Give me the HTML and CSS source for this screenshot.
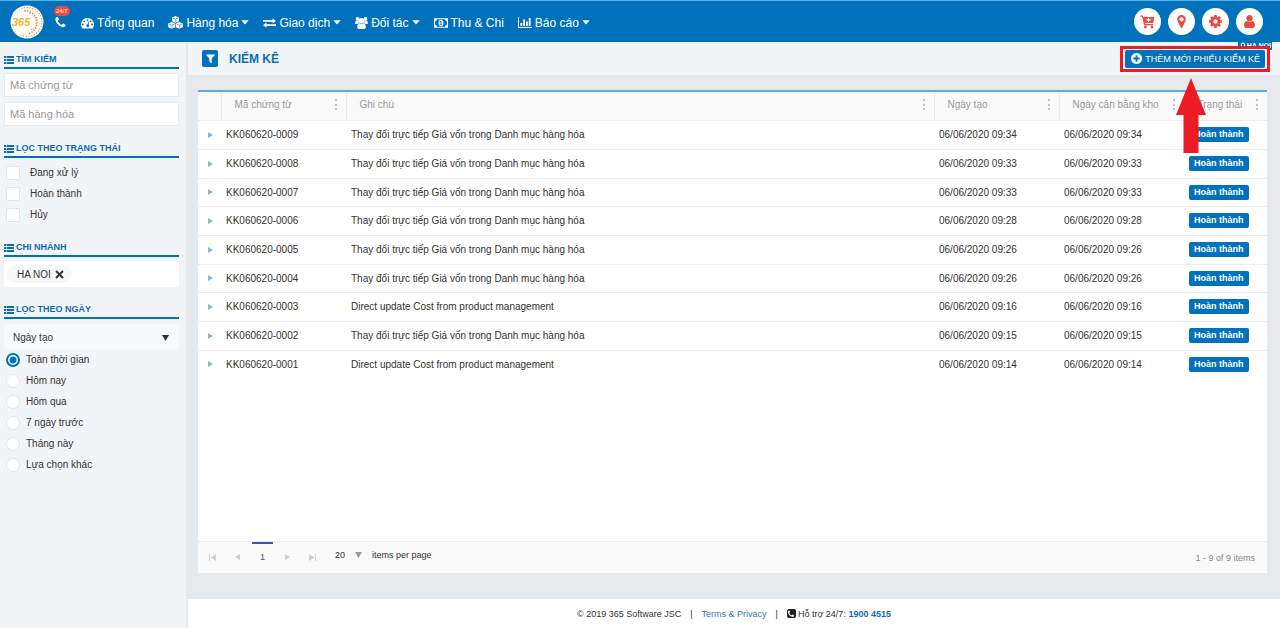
FILE: index.html
```html
<!DOCTYPE html>
<html lang="vi">
<head>
<meta charset="UTF-8">
<meta name="viewport" content="width=device-width, initial-scale=1">
<title>Kiểm kê</title>
<link rel="stylesheet" href="styles.css">
</head>
<body>

<!-- Icon dùng chung -->
<svg class="defs" width="0" height="0" aria-hidden="true">
  <symbol id="caret" viewBox="0 0 8 5"><path d="M0.3 0.3h7.4L4 4.6z"/></symbol>
  <symbol id="list" viewBox="0 0 10 8">
    <path d="M0 0h2.4v2H0zM3 0h7v2H3zM0 3h2.4v2H0zM3 3h7v2H3zM0 6h2.4v2H0zM3 6h7v2H3z"/>
  </symbol>
  <symbol id="dots" viewBox="0 0 3 12"><path d="M0 0h2v2H0zM0 5h2v2H0zM0 9h2v2H0z"/></symbol>
  <symbol id="play" viewBox="0 0 5 6"><path d="M0 0l5 3-5 3z"/></symbol>
  <symbol id="marker" viewBox="0 0 1792 1792"><path d="M1152 640q0-106-75-181t-181-75-181 75-75 181 75 181 181 75 181-75 75-181zm256 0q0 109-33 179l-364 774q-16 33-47.5 52t-67.5 19-67.5-19-46.5-52l-365-774q-33-70-33-179 0-212 150-362t362-150 362 150 150 362z"/></symbol>
  <symbol id="phone" viewBox="0 0 1792 1792"><path d="M1600 1240q0 27-10 70.5t-21 68.5q-21 50-122 106-94 51-186 51-27 0-53-3.5t-57.5-12.5-47-14.5-55.5-20.5-49-18q-98-35-175-83-127-79-264-216t-216-264q-48-77-83-175-3-9-18-49t-20.5-55.5-14.5-47-12.5-57.5-3.5-53q0-92 51-186 56-101 106-122 25-11 68.5-21t70.5-10q14 0 21 3 18 6 53 76 11 19 30 54t35 63.5 31 53.5q3 4 17.5 25t21.5 35.5 7 28.5q0 20-28.5 50t-62 55-62 53-28.5 46q0 9 5 22.5t8.5 20.5 14 24 11.5 19q76 137 174 235t235 174q2 1 19 11.5t24 14 20.5 8.5 22.5 5q18 0 46-28.5t53-62 55-62 50-28.5q14 0 28.5 7t35.5 21.5 25 17.5q25 15 53.5 31t63.5 35 54 30q70 35 76 53 3 7 3 21z"/></symbol>
</svg>

<header class="topbar">
  <a class="logo" href="#" aria-label="365">
    <svg width="34" height="34" viewBox="0 0 34 34">
      <circle cx="17" cy="17" r="16.5" fill="#fff"/>
      <g fill="none" stroke-linecap="round">
        <path d="M12 3.500a14.500 14.500 0 1 1 0 27" stroke="#f0953c" stroke-width="1.400" stroke-dasharray="0 2.700"/>
        <path d="M15 5.800a11.700 11.700 0 0 1 4 22.800" stroke="#ee803c" stroke-width="1.700" stroke-dasharray="0 2.700"/>
        <path d="M20 8.500a9 9 0 0 1 0 17" stroke="#f3a84a" stroke-width="1.300" stroke-dasharray="0 2.500"/>
        <path d="M14 6a12 12 0 0 0-8 5M16 29a12 12 0 0 1-9-5M12 3.500a14 14 0 0 0-8 7M12 30.500a14 14 0 0 1-8-6" stroke="#f8d48c" stroke-width="1" stroke-dasharray="0 2.500"/>
      </g>
      <text class="logo-text" x="2" y="21">365</text>
    </svg>
  </a>
  <a class="hotline" href="#" aria-label="Hotline">
    <svg width="13" height="13"><use href="#phone"/></svg>
    <span class="hotline-tag">24/7</span>
  </a>

  <nav class="menu">
    <a href="#">
      <svg width="13" height="12" viewBox="0 0 13 12"><path fill-rule="evenodd" d="M6.500 1A6.500 6.500 0 0 0 1.200 11.200q.2.300.6.300h9.400q.4 0 .6-.3A6.500 6.500 0 0 0 6.500 1zM6.500 2a.9.900 0 1 1 0 1.800.9.900 0 0 1 0-1.800zM3.200 3.400a.9.900 0 1 1 0 1.800.9.900 0 0 1 0-1.800zM1.900 6.600a.9.900 0 1 1 0 1.800.9.900 0 0 1 0-1.800zM11.100 6.600a.9.900 0 1 1 0 1.800.9.900 0 0 1 0-1.800zM9.800 3.400a.9.900 0 1 1 0 1.800.9.900 0 0 1 0-1.800zM7.600 4.300l.7.200-.8 3a1.400 1.400 0 1 1-.8-.2z"/></svg>
      Tổng quan</a>
    <a href="#">
      <svg width="15" height="13" viewBox="0 0 15 13"><path d="M7.500 0l3.500 1.500v3.700L7.500 6.800 4 5.200V1.500z M3.700 6l3.500 1.500v3.700L3.700 12.800.2 11.200V7.500z M11.300 6l3.500 1.500v3.700l-3.500 1.600-3.500-1.600V7.500z"/><path d="M4.800 2l2.700 1.100L10.200 2M7.800 3.200v2.900M1 8l2.700 1.100L6.400 8M4 9.200v2.900M8.600 8l2.700 1.100L14 8M11.600 9.200v2.900" fill="none" stroke="#0072bc" stroke-width=".6"/></svg>
      Hàng hóa <svg class="caret" width="8" height="5"><use href="#caret"/></svg></a>
    <a href="#">
      <svg width="13" height="10" viewBox="0 0 13 10"><path d="M0 2h9.600V.2L13 2.900 9.600 5.500V3.700H0zM13 6.300H3.400V4.500L0 7.200l3.400 2.600V8H13z"/></svg>
      Giao dịch <svg class="caret" width="8" height="5"><use href="#caret"/></svg></a>
    <a href="#">
      <svg width="13" height="12" viewBox="0 0 13 12"><circle cx="2.600" cy="2" r="1.900"/><circle cx="10.400" cy="2" r="1.900"/><circle cx="6.500" cy="3.700" r="2.700"/><path d="M0 6.400Q0 4 1.300 4h2.200q.2 1.300 1 2.100-1.300.1-1.900 1H1.300Q0 7.100 0 6.400zM13 6.400Q13 4 11.700 4H9.500q-.2 1.300-1 2.100 1.300.1 1.900 1h1.300q1.300 0 1.300-.7zM2.200 10.200q0-3.900 2.500-3.900 1.800 1.200 3.600 0 2.500 0 2.500 3.900 0 1.800-1.600 1.800H3.800q-1.600 0-1.600-1.800z"/></svg>
      Đối tác <svg class="caret" width="8" height="5"><use href="#caret"/></svg></a>
    <a href="#">
      <svg width="14" height="10" viewBox="0 0 13 9"><path fill-rule="evenodd" d="M0 0h13v9H0zM2.800 1A1.900 1.900 0 0 1 1 2.800v3.400A1.900 1.900 0 0 1 2.800 8h7.400A1.900 1.900 0 0 1 12 6.200V2.800A1.900 1.900 0 0 1 10.200 1z"/><path fill-rule="evenodd" d="M6.500 1.400c1.400 0 2.300 1.400 2.300 3.100S7.900 7.600 6.500 7.600 4.200 6.200 4.200 4.500 5.100 1.400 6.500 1.400zM5.400 3.300l.5.500.2-.1v1.700h-.6v.7H7.600v-.7H7V2.700h-.8z"/></svg>
      Thu &amp; Chi</a>
    <a href="#">
      <svg width="14" height="11" viewBox="0 0 14 11"><path d="M0 0h1v10h13v1H0zM2.400 6h1.800v3H2.400zM5.200 2.500H7V9H5.200zM8 4.500h1.800V9H8zM10.800 1h1.800v8h-1.800z"/></svg>
      Báo cáo <svg class="caret" width="8" height="5"><use href="#caret"/></svg></a>
  </nav>

  <div class="tools">
    <button type="button" aria-label="Bán hàng">
      <svg width="15" height="14" viewBox="0 0 15 14"><path fill-rule="evenodd" d="M.3.600h2.600l.4 1.300h11L13.200 8H4.800l.2 1h8.200v1.200H4L2.200 1.800H.3zM8 3v1.300H6.600v1.200H8v1.300h1.200V5.500h1.400V4.300H9.200V3z"/><circle cx="5.300" cy="12" r="1.400"/><circle cx="12" cy="12" r="1.400"/></svg>
    </button>
    <button type="button" aria-label="Chi nhánh"><svg width="15" height="15"><use href="#marker"/></svg></button>
    <button type="button" aria-label="Cài đặt">
      <svg width="15" height="15" viewBox="0 0 1792 1792"><path d="M1152 896q0-106-75-181t-181-75-181 75-75 181 75 181 181 75 181-75 75-181zm512-109v222q0 12-8 23t-20 13l-185 28q-19 54-39 91 35 50 107 138 10 12 10 25t-9 23q-27 37-99 108t-94 71q-12 0-26-9l-138-108q-44 23-91 38-16 136-29 186-7 28-36 28h-222q-14 0-24.500-8.500t-11.500-21.500l-28-184q-49-16-90-37l-141 107q-10 9-25 9-14 0-25-11-126-114-165-168-7-10-7-23 0-12 8-23 15-21 51-66.500t54-70.500q-27-50-41-99l-183-27q-13-2-21-12.500t-8-23.500v-222q0-12 8-23t19-13l186-28q14-46 39-92-40-57-107-138-10-12-10-24 0-10 9-23 26-36 98.500-107.500t94.500-71.500q13 0 26 10l138 107q44-23 91-38 16-136 29-186 7-28 36-28h222q14 0 24.500 8.500t11.500 21.500l28 184q49 16 90 37l142-107q9-9 24-9 13 0 25 10 129 119 165 170 7 8 7 22 0 12-8 23-15 21-51 66.500t-54 70.500q26 50 41 98l183 28q13 2 21 12.500t8 23.500z"/></svg>
    </button>
    <button type="button" aria-label="Tài khoản">
      <svg width="15" height="15" viewBox="0 0 1792 1792"><path d="M1536 1399q0 109-62.500 187t-150.500 78h-854q-88 0-150.500-78t-62.500-187q0-85 8.500-160.500t31.500-152 58.500-131 94-89 134.500-34.500q131 128 313 128t313-128q76 0 134.500 34.500t94 89 58.500 131 31.500 152 8.500 160.500zm-256-887q0 159-112.500 271.500t-271.500 112.500-271.500-112.500-112.500-271.500 112.500-271.500 271.500-112.500 271.500 112.500 112.500 271.500z"/></svg>
    </button>
  </div>
</header>

<div class="layout">
  <aside class="sidebar">
    <section>
      <h2><svg width="10" height="8"><use href="#list"/></svg>TÌM KIẾM</h2>
      <div class="search">
        <input type="text" placeholder="Mã chứng từ" aria-label="Mã chứng từ">
        <input type="text" placeholder="Mã hàng hóa" aria-label="Mã hàng hóa">
      </div>
    </section>

    <section>
      <h2><svg width="10" height="8"><use href="#list"/></svg>LỌC THEO TRẠNG THÁI</h2>
      <div class="checks">
        <label><input type="checkbox">Đang xử lý</label>
        <label><input type="checkbox">Hoàn thành</label>
        <label><input type="checkbox">Hủy</label>
      </div>
    </section>

    <section>
      <h2><svg width="10" height="8"><use href="#list"/></svg>CHI NHÁNH</h2>
      <div class="branches">
        <span class="chip">HA NOI
          <button type="button" aria-label="Xóa HA NOI"><svg width="9" height="9" viewBox="0 0 9 9"><path d="M1 1l7 7M8 1L1 8" stroke="#333" stroke-width="2"/></svg></button>
        </span>
      </div>
    </section>

    <section>
      <h2><svg width="10" height="8"><use href="#list"/></svg>LỌC THEO NGÀY</h2>
      <div class="select">
        <select aria-label="Loại ngày"><option>Ngày tạo</option></select>
        <svg width="7" height="6" viewBox="0 0 7 6"><path d="M0 0h7L3.500 6z"/></svg>
      </div>
      <div class="radios">
        <label><input type="radio" name="range" checked>Toàn thời gian</label>
        <label><input type="radio" name="range">Hôm nay</label>
        <label><input type="radio" name="range">Hôm qua</label>
        <label><input type="radio" name="range">7 ngày trước</label>
        <label><input type="radio" name="range">Tháng này</label>
        <label><input type="radio" name="range">Lựa chọn khác</label>
      </div>
    </section>
  </aside>

  <main class="main">
    <div class="titlebar">
      <button type="button" class="filter" aria-label="Lọc"><svg width="11" height="11" viewBox="0 0 1792 1792"><path d="M1595 295q17 41-14 70l-493 493v742q0 42-39 59-13 5-25 5-27 0-45-19l-256-256q-19-19-19-45v-486l-493-493q-31-29-14-70 17-39 59-39h1280q42 0 59 39z"/></svg></button>
      <h1>KIỂM KÊ</h1>
      <span class="location"><svg width="8" height="8"><use href="#marker"/></svg>HA NOI</span>
      <div class="highlight">
        <button type="button" class="add"><svg width="13" height="13" viewBox="0 0 1792 1792"><path d="M1344 960v-128q0-26-19-45t-45-19h-256v-256q0-26-19-45t-45-19h-128q-26 0-45 19t-19 45v256h-256q-26 0-45 19t-19 45v128q0 26 19 45t45 19h256v256q0 26 19 45t45 19h128q26 0 45-19t19-45v-256h256q26 0 45-19t19-45zm320-64q0 209-103 385.500t-279.500 279.500-385.500 103-385.500-103-279.500-279.500-103-385.500 103-385.500 279.500-279.500 385.500-103 385.500 103 279.500 279.500 103 385.500z"/></svg>THÊM MỚI PHIẾU KIỂM KÊ</button>
        <svg class="arrow" width="30" height="75" viewBox="0 0 30 75"><path d="M15 0l15 37h-7.500v38h-15V37H0z"/></svg>
      </div>
    </div>

    <div class="grid">
      <table>
        <colgroup>
          <col class="c-toggle"><col class="c-code"><col><col class="c-date"><col class="c-date"><col class="c-status">
        </colgroup>
        <thead>
          <tr>
            <th></th>
            <th><div>Mã chứng từ <svg width="3" height="12"><use href="#dots"/></svg></div></th>
            <th><div>Ghi chú <svg width="3" height="12"><use href="#dots"/></svg></div></th>
            <th><div>Ngày tạo <svg width="3" height="12"><use href="#dots"/></svg></div></th>
            <th><div>Ngày cân bằng kho <svg width="3" height="12"><use href="#dots"/></svg></div></th>
            <th><div>Trạng thái <svg width="3" height="12"><use href="#dots"/></svg></div></th>
          </tr>
        </thead>
        <tbody>
          <tr><td><svg width="5" height="6"><use href="#play"/></svg></td><td>KK060620-0009</td><td>Thay đổi trực tiếp Giá vốn trong Danh mục hàng hóa</td><td>06/06/2020 09:34</td><td>06/06/2020 09:34</td><td><span class="done">Hoàn thành</span></td></tr>
          <tr><td><svg width="5" height="6"><use href="#play"/></svg></td><td>KK060620-0008</td><td>Thay đổi trực tiếp Giá vốn trong Danh mục hàng hóa</td><td>06/06/2020 09:33</td><td>06/06/2020 09:33</td><td><span class="done">Hoàn thành</span></td></tr>
          <tr><td><svg width="5" height="6"><use href="#play"/></svg></td><td>KK060620-0007</td><td>Thay đổi trực tiếp Giá vốn trong Danh mục hàng hóa</td><td>06/06/2020 09:33</td><td>06/06/2020 09:33</td><td><span class="done">Hoàn thành</span></td></tr>
          <tr><td><svg width="5" height="6"><use href="#play"/></svg></td><td>KK060620-0006</td><td>Thay đổi trực tiếp Giá vốn trong Danh mục hàng hóa</td><td>06/06/2020 09:28</td><td>06/06/2020 09:28</td><td><span class="done">Hoàn thành</span></td></tr>
          <tr><td><svg width="5" height="6"><use href="#play"/></svg></td><td>KK060620-0005</td><td>Thay đổi trực tiếp Giá vốn trong Danh mục hàng hóa</td><td>06/06/2020 09:26</td><td>06/06/2020 09:26</td><td><span class="done">Hoàn thành</span></td></tr>
          <tr><td><svg width="5" height="6"><use href="#play"/></svg></td><td>KK060620-0004</td><td>Thay đổi trực tiếp Giá vốn trong Danh mục hàng hóa</td><td>06/06/2020 09:26</td><td>06/06/2020 09:26</td><td><span class="done">Hoàn thành</span></td></tr>
          <tr><td><svg width="5" height="6"><use href="#play"/></svg></td><td>KK060620-0003</td><td>Direct update Cost from product management</td><td>06/06/2020 09:16</td><td>06/06/2020 09:16</td><td><span class="done">Hoàn thành</span></td></tr>
          <tr><td><svg width="5" height="6"><use href="#play"/></svg></td><td>KK060620-0002</td><td>Thay đổi trực tiếp Giá vốn trong Danh mục hàng hóa</td><td>06/06/2020 09:15</td><td>06/06/2020 09:15</td><td><span class="done">Hoàn thành</span></td></tr>
          <tr><td><svg width="5" height="6"><use href="#play"/></svg></td><td>KK060620-0001</td><td>Direct update Cost from product management</td><td>06/06/2020 09:14</td><td>06/06/2020 09:14</td><td><span class="done">Hoàn thành</span></td></tr>
        </tbody>
      </table>

      <div class="pager">
        <button type="button" aria-label="Trang đầu"><svg width="7" height="7" viewBox="0 0 7 7"><path d="M0 0h1v7H0zM7 0v7L1.500 3.500z"/></svg></button>
        <button type="button" aria-label="Trang trước"><svg width="5" height="6" viewBox="0 0 5 6"><path d="M5 0v6L0 3z"/></svg></button>
        <button type="button" class="current">1</button>
        <button type="button" aria-label="Trang sau"><svg width="5" height="6"><use href="#play"/></svg></button>
        <button type="button" aria-label="Trang cuối"><svg width="7" height="7" viewBox="0 0 7 7"><path d="M6 0h1v7H6zM0 0v7l5.500-3.500z"/></svg></button>
        <div class="size">
          <select id="size"><option>20</option></select>
          <svg width="7" height="6" viewBox="0 0 7 6"><path d="M0 0h7L3.500 6z"/></svg>
          <label for="size">items per page</label>
        </div>
        <span class="info">1 - 9 of 9 items</span>
      </div>
    </div>

    <footer class="footer">
      <span>© 2019 365 Software JSC</span>
      <span class="bar">|</span>
      <a href="#">Terms &amp; Privacy</a>
      <span class="bar">|</span>
      <span class="phone-box"><svg width="8" height="8"><use href="#phone"/></svg></span>
      <span class="support">Hỗ trợ 24/7: <b>1900 4515</b></span>
    </footer>
  </main>
</div>

</body>
</html>
```

FILE: styles.css
```css
* { box-sizing: border-box; }
body { margin: 0; min-height: 100vh; display: flex; flex-direction: column; font-family: "Liberation Sans", Arial, sans-serif; font-size: 10px; color: #333; background: #e5e9ec; }
button, input, select { font: inherit; color: inherit; margin: 0; }
button { border: 0; padding: 0; background: none; cursor: pointer; }
a { text-decoration: none; }
svg { display: block; fill: currentColor; flex: none; }
.defs { position: absolute; }

/* Thanh trên */
.topbar { display: flex; align-items: center; height: 42px; padding: 0 17px 0 10px; background: #0072bc; border-top: 1px solid #5fb2e6; color: #fff; }
.topbar a { color: #fff; }
.logo-text { font-size: 11px; font-weight: bold; font-style: italic; fill: #f2b92c; }
.hotline { position: relative; margin-left: 10px; padding-top: 2px; }
.hotline-tag { position: absolute; left: 0; top: -8px; padding: 0 2px; border-radius: 5px; background: #e74c3c; font-size: 6px; line-height: 10px; }
.menu { display: flex; gap: 14px; margin-left: 14px; padding-top: 2px; font-size: 12px; }
.menu a { display: flex; align-items: center; gap: 3px; white-space: nowrap; }
.tools { display: flex; gap: 7px; margin-left: auto; }
.tools button { display: flex; align-items: center; justify-content: center; width: 27px; height: 27px; border-radius: 50%; background: #fff; color: #e74c3c; }

.layout { flex: 1; display: flex; }

/* Bộ lọc bên trái */
.sidebar { width: 188px; padding: 10px 7px 0 4px; background: #f2f5f7; border-right: 2px solid #e5e9ec; }
.sidebar section { padding-bottom: 15px; }
.sidebar h2 { display: flex; align-items: center; gap: 2px; margin: 0 0 4px; border-bottom: 2px solid #0072bc; font-size: 9px; line-height: 15px; color: #0f6cb2; }
.search { display: flex; flex-direction: column; gap: 5px; }
.search input { width: 100%; height: 24px; padding: 0 5px; border: 1px solid #e8ebed; background: #fff; font-size: 11px; }
.search input::placeholder { color: #999; }
.checks label, .radios label { display: flex; align-items: center; height: 21px; }
.checks input, .radios input { appearance: none; width: 14px; height: 14px; border: 1px solid #e2e6e8; background: #fff; }
.checks input { margin: 0 10px 0 2px; border-radius: 2px; }
.radios input { margin: 0 6px 0 2px; border-radius: 50%; }
.radios input:checked { border: 2px solid #0072bc; background: radial-gradient(circle, #0072bc 3px, #fff 4px); }
.branches { padding: 4px 3px; background: #fff; }
.chip { display: inline-flex; align-items: center; gap: 4px; height: 18px; padding: 0 8px 0 10px; border-radius: 9px; background: #f8f8f8; }
.select { position: relative; padding-top: 1px; }
.select select { appearance: none; display: block; width: 100%; height: 25px; padding: 2px 9px 0; border: 0; background: #f8f9fa; }
.select svg { position: absolute; right: 10px; top: 12px; pointer-events: none; }

/* Nội dung chính */
.main { flex: 1; display: flex; flex-direction: column; min-width: 0; }
.titlebar { position: relative; display: flex; align-items: center; height: 33px; padding: 0 10px 0 14px; background: #f2f5f7; }
.filter { display: flex; align-items: center; justify-content: center; width: 16px; height: 17px; border-radius: 2px; background: #0072bc; color: #fff; }
h1 { margin: 0 auto 0 11px; font-size: 12px; color: #0f6cb2; }
.location { position: absolute; right: 8px; top: 0; display: flex; align-items: center; padding: 0 1px; background: #0072bc; color: #fff; font-size: 7px; font-weight: bold; line-height: 8px; }
.highlight { position: relative; padding: 1px 2px; border: 3px solid #ed1c24; background: #f2f5f7; }
.add { display: flex; align-items: center; gap: 2px; height: 18px; padding: 0 5px; border-radius: 2px; background: #0072bc; color: #fff; font-size: 9px; white-space: nowrap; }
.arrow { position: absolute; right: 61px; top: 29px; color: #ed1c24; pointer-events: none; }

.grid { flex: 1; display: flex; flex-direction: column; margin: 15px 13px 26px 10px; background: #fff; border-top: 2px solid #56b2da; }
table { width: 100%; border-collapse: collapse; table-layout: fixed; }
.c-toggle { width: 23px; }
.c-code, .c-date { width: 125px; }
.c-status { width: 83px; }
th { height: 28px; padding: 0 8px 2px 13px; border-bottom: 1px solid #ececec; border-left: 1px solid #ececec; background: #fafafa; color: #999; font-weight: normal; text-align: left; white-space: nowrap; }
th:first-child { border-left: 0; padding: 0; }
th div { display: flex; align-items: center; justify-content: space-between; }
th svg { color: #c4c4c4; }
td { height: 29px; padding: 0 5px; border-bottom: 1px solid #ececec; white-space: nowrap; }
tr:nth-child(3n) td { height: 28px; }
tr:last-child td { border-bottom: 0; }
td:first-child { padding-left: 10px; }
td svg { color: #7fb8df; }
.done { display: inline-block; padding: 0 5px; border-radius: 2px; background: #0072bc; color: #fff; font-size: 9px; font-weight: bold; line-height: 15px; }

.pager { display: flex; align-items: center; gap: 4px; height: 32px; margin-top: auto; padding: 0 12px 0 4px; border-top: 1px solid #ececec; background: #fafafa; font-size: 9px; }
.pager button { display: flex; align-items: center; justify-content: center; width: 21px; height: 100%; padding-bottom: 3px; color: #d0d0d0; border-top: 2px solid transparent; }
.pager .current { color: #3f51b5; border-top-color: #3f51b5; }
.size { display: flex; align-items: center; margin-left: 8px; padding-bottom: 6px; }
.size select { appearance: none; width: 20px; padding: 0; border: 0; background: none; }
.size svg { color: #999; }
.size label { margin-left: 10px; }
.info { margin-left: auto; color: #888; }

.footer { display: flex; align-items: center; justify-content: center; height: 29px; background: #fff; font-size: 9px; }
.footer a { color: #337ab7; }
.footer .bar { margin: 0 9px; }
.phone-box { display: flex; align-items: center; justify-content: center; width: 9px; height: 9px; border-radius: 2px; background: #222; color: #fff; }
.footer .support { margin-left: 2px; }
.footer b { color: #0f6cb2; }
```
